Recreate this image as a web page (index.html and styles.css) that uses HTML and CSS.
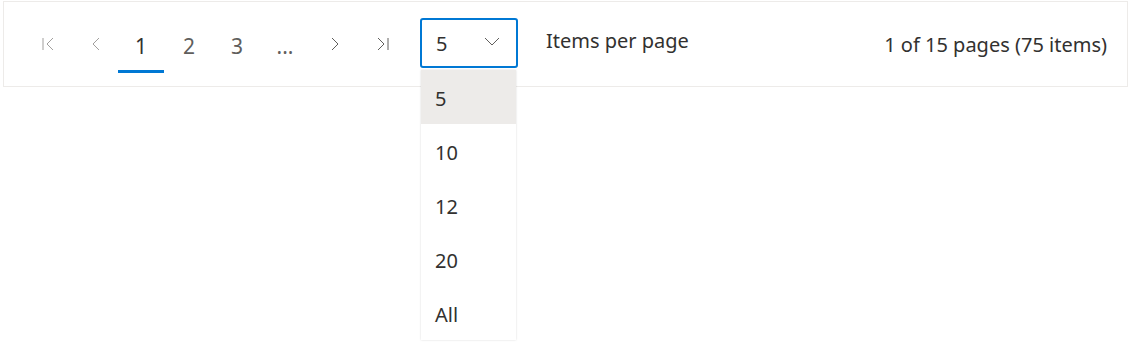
FILE: index.html
```html
<!DOCTYPE html>
<html lang="en">
<head>
    <meta charset="UTF-8">
    <title>Pager</title>
    <link rel="stylesheet" href="styles.css">
</head>
<body>
    <!-- Pager -->
    <div class="pager">
        <div class="pages">
            <button class="nav-btn disabled" aria-label="First page">
                <svg width="12" height="14" viewBox="0 0 12 14"><path d="M1 1v12M11 1L5 7l6 6" fill="none" stroke="currentColor" stroke-width="1"/></svg>
            </button>
            <button class="nav-btn disabled" aria-label="Previous page">
                <svg width="8" height="14" viewBox="0 0 8 14"><path d="M7 1L1 7l6 6" fill="none" stroke="currentColor" stroke-width="1"/></svg>
            </button>
            <button class="page-btn selected">1</button>
            <button class="page-btn">2</button>
            <button class="page-btn">3</button>
            <button class="page-btn">...</button>
            <button class="nav-btn next" aria-label="Next page">
                <svg width="8" height="14" viewBox="0 0 8 14"><path d="M1 1l6 6-6 6" fill="none" stroke="currentColor" stroke-width="1"/></svg>
            </button>
            <button class="nav-btn next" aria-label="Last page">
                <svg width="12" height="14" viewBox="0 0 12 14"><path d="M1 1l6 6-6 6M11 1v12" fill="none" stroke="currentColor" stroke-width="1"/></svg>
            </button>
        </div>

        <!-- Page size -->
        <div class="page-size">
            <div class="select">
                <span>5</span>
                <svg width="16" height="9" viewBox="0 0 16 9"><path d="M1 1l7 7 7-7" fill="none" stroke="currentColor" stroke-width="1"/></svg>
            </div>
            <ul class="options">
                <li class="active">5</li>
                <li>10</li>
                <li>12</li>
                <li>20</li>
                <li>All</li>
            </ul>
        </div>
        <div class="label">Items per page</div>

        <div class="summary">1 of 15 pages (75 items)</div>
    </div>
</body>
</html>
```

FILE: styles.css
```css
/* General Styles */
html, body {
    min-height: 344px;
}
body {
    font-family: 'Noto Sans', 'Open Sans', sans-serif;
    color: #323130;
    background-color: #ffffff;
    margin: 0;
    padding: 1px 3px 0 3px;
    box-sizing: border-box;
}
/* Pager */
.pager {
    display: flex;
    align-items: center;
    height: 84px;
    border: 1px solid #edebe9;
    padding: 0 20px 0 17px;
    font-size: 20px;
}
.pages {
    display: flex;
    align-items: center;
    height: 52px;
    margin-top: 6px;
}
.pages button {
    font-family: inherit;
    font-size: 21px;
    background: none;
    border: none;
    padding: 0;
    margin: 0 1px;
    height: 52px;
    display: flex;
    align-items: center;
    justify-content: center;
    box-sizing: border-box;
    border-bottom: 3px solid transparent;
    color: #605e5c;
}
.pages button svg {
    margin-top: -3px;
}
.nav-btn {
    width: 46px;
    padding-left: 6px !important;
}
.nav-btn.next {
    padding-left: 4px !important;
}
.nav-btn.disabled {
    color: #a19f9d;
}
.page-btn {
    width: 46px;
}
.page-btn.selected {
    color: #323130;
    border-bottom-color: #0078d4 !important;
}
/* Page size dropdown */
.page-size {
    position: relative;
    margin-left: 15px;
    margin-top: -3px;
}
.select {
    width: 98px;
    height: 50px;
    box-sizing: border-box;
    border: 2px solid #0078d4;
    border-radius: 3px;
    display: flex;
    align-items: center;
    justify-content: space-between;
    padding: 2px 16px 0 14px;
    color: #323130;
}
.select svg {
    color: #605e5c;
    margin-top: -4px;
}
.options {
    position: absolute;
    top: 52px;
    left: 1px;
    width: 95px;
    margin: 0;
    padding: 0;
    list-style: none;
    background-color: #ffffff;
    box-shadow: 0 0 2px rgba(0, 0, 0, 0.15);
}
.options li {
    height: 54px;
    box-sizing: border-box;
    padding: 4px 0 0 14px;
    line-height: 50px;
}
.options li.active {
    background-color: #edebe9;
}
.label {
    margin-left: 28px;
    margin-top: -8px;
}
.summary {
    margin-left: auto;
}
```
